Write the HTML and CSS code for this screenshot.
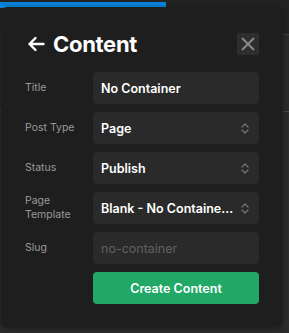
FILE: index.html
```html
<!DOCTYPE html>
<html lang="en">
<head>
    <meta charset="UTF-8">
    <meta name="viewport" content="width=device-width, initial-scale=1.0">
    <title>Content</title>
    <link rel="stylesheet" href="styles.css">
</head>
<body>
    <div class="app">
        <div class="topbar">
            <div class="tab-active"></div>
        </div>
        <div class="toolbar"></div>
        <div class="canvas"></div>
    </div>

    <div class="panel">
        <div class="panel-header">
            <h2 class="panel-title">
                <svg class="back-icon" width="18" height="16" viewBox="0 0 18 16">
                    <path d="M16.5 8H2.5M8.5 2L2.5 8l6 6" fill="none" stroke="#fff" stroke-width="2.4" stroke-linecap="round" stroke-linejoin="round"/>
                </svg>
                Content
            </h2>
            <button class="close-btn">
                <svg width="14" height="14" viewBox="0 0 14 14">
                    <path d="M1.5 1.5l11 11M12.5 1.5l-11 11" stroke="#8c8c8c" stroke-width="1.8" stroke-linecap="round"/>
                </svg>
            </button>
        </div>

        <div class="form">
            <div class="row">
                <label class="label">Title</label>
                <div class="field">No Container</div>
            </div>
            <div class="row">
                <label class="label">Post Type</label>
                <div class="field select">
                    <span class="value">Page</span>
                    <svg class="chevrons" width="8" height="11" viewBox="0 0 8 11"><path d="M1 4l3-3 3 3M1 7l3 3 3-3" fill="none" stroke="#767676" stroke-width="1.2" stroke-linecap="round" stroke-linejoin="round"/></svg>
                </div>
            </div>
            <div class="row">
                <label class="label">Status</label>
                <div class="field select">
                    <span class="value">Publish</span>
                    <svg class="chevrons" width="8" height="11" viewBox="0 0 8 11"><path d="M1 4l3-3 3 3M1 7l3 3 3-3" fill="none" stroke="#767676" stroke-width="1.2" stroke-linecap="round" stroke-linejoin="round"/></svg>
                </div>
            </div>
            <div class="row">
                <label class="label">Page Template</label>
                <div class="field select">
                    <span class="value">Blank - No Container Full Width</span>
                    <svg class="chevrons" width="8" height="11" viewBox="0 0 8 11"><path d="M1 4l3-3 3 3M1 7l3 3 3-3" fill="none" stroke="#767676" stroke-width="1.2" stroke-linecap="round" stroke-linejoin="round"/></svg>
                </div>
            </div>
            <div class="row">
                <label class="label">Slug</label>
                <div class="field placeholder">no-container</div>
            </div>
            <div class="row">
                <span class="label"></span>
                <button class="create-btn">Create Content</button>
            </div>
        </div>
    </div>
</body>
</html>
```

FILE: styles.css
```css
body {
    margin: 0;
    background-color: #262626;
    font-family: Inter, "Noto Sans", sans-serif;
    overflow: hidden;
}
.app {
    height: 333px;
    display: flex;
    flex-direction: column;
}
.topbar {
    height: 35px;
    background-color: #222;
    border-bottom: 1px solid #3c3c3c;
    box-sizing: border-box;
}
.tab-active {
    width: 166px;
    height: 6px;
    margin-top: 2px;
    background-color: #0a82d8;
}
.toolbar {
    height: 77px;
    background-color: #2a2a2a;
    border-bottom: 1px solid #454545;
    box-sizing: border-box;
}
.canvas {
    flex: 1;
    background-color: #2c2c2c;
}
.panel {
    position: absolute;
    top: 7px;
    left: 1px;
    width: 282px;
    height: 320px;
    box-sizing: border-box;
    padding: 26px 24px 0 24px;
    background-color: #1e1e1e;
    border-radius: 6px;
    box-shadow: 0 2px 6px rgba(0, 0, 0, 0.35);
}
.panel-header {
    display: flex;
    justify-content: space-between;
    align-items: center;
    height: 22px;
    margin-bottom: 17px;
}
.panel-title {
    margin: 0;
    display: flex;
    align-items: center;
    gap: 8px;
    color: #fff;
    font-size: 22px;
    font-weight: 700;
    letter-spacing: -0.3px;
    padding-left: 2px;
}
.back-icon {
    display: block;
}
.close-btn {
    width: 22px;
    height: 22px;
    padding: 0;
    border: none;
    border-radius: 3px;
    background-color: #2e2e2e;
    display: flex;
    align-items: center;
    justify-content: center;
}
.form {
    display: flex;
    flex-direction: column;
    gap: 8px;
}
.row {
    display: flex;
    align-items: center;
    gap: 8px;
}
.label {
    width: 60px;
    flex-shrink: 0;
    color: #9a9a9a;
    font-size: 10.5px;
    line-height: 14px;
}
.field {
    flex: 1;
    min-width: 0;
    height: 32px;
    box-sizing: border-box;
    padding: 0 8px;
    display: flex;
    align-items: center;
    gap: 5px;
    background-color: #2a2a2a;
    border-radius: 4px;
    color: #fff;
    font-size: 12.5px;
    font-weight: 600;
}
.value {
    flex: 1;
    min-width: 0;
    white-space: nowrap;
    overflow: hidden;
    text-overflow: ellipsis;
}
.chevrons {
    flex-shrink: 0;
    margin-right: 2px;
}
.placeholder {
    color: #616161;
    font-weight: 400;
}
.create-btn {
    flex: 1;
    height: 32px;
    border: none;
    border-radius: 4px;
    background-color: #22a866;
    color: #fff;
    font-family: Inter, "Noto Sans", sans-serif;
    font-size: 12.5px;
    font-weight: 600;
}
```
